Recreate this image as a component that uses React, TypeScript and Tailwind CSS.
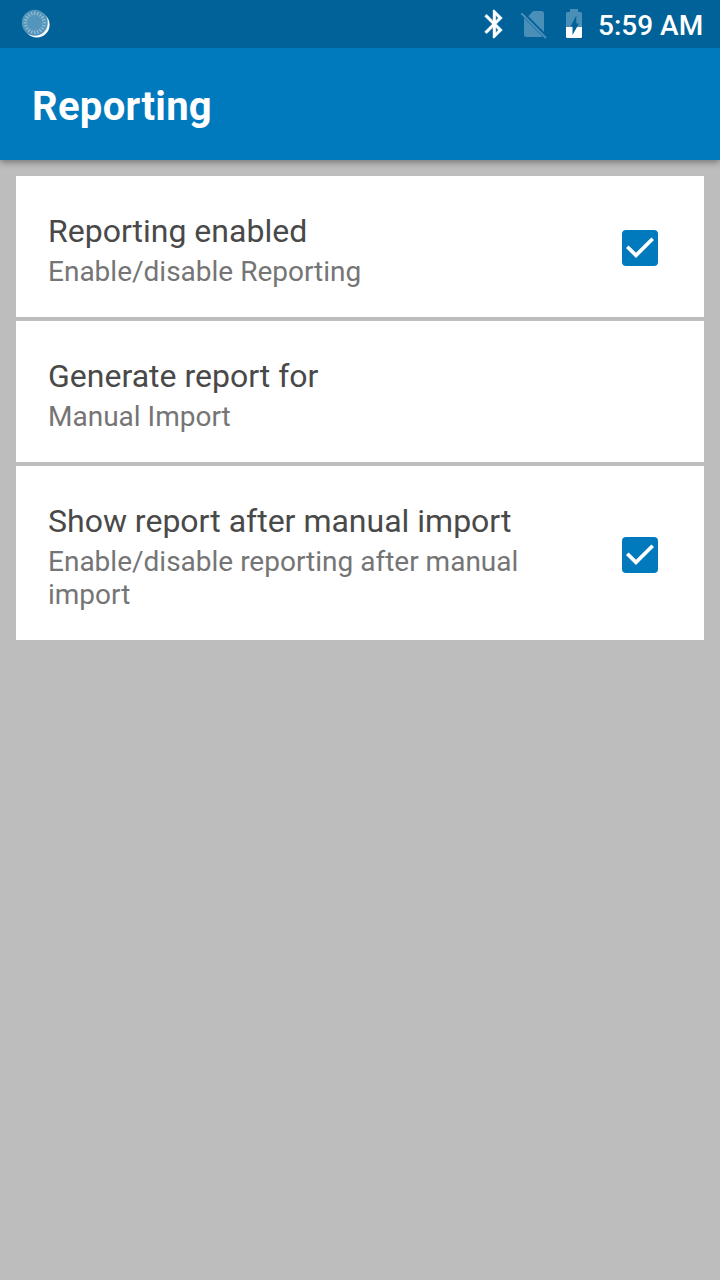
import React from 'react';

function SpinnerIcon() {
  const ticks = Array.from({ length: 20 }, (_, i) => i * 18);
  return (
    <svg className="ml-5 h-12 w-8" viewBox="20 0 32 48">
      <circle cx="36.8" cy="24.8" r="12.8" fill="#fff" />
      <circle cx="34.8" cy="22.8" r="13" fill="#5496bb" />
      {ticks.map((a) => (
        <path key={a} d="M34.8 11.6v3.4" stroke="#9cc3d8" strokeWidth="1.1" transform={`rotate(${a} 34.8 22.8)`} />
      ))}
    </svg>
  );
}

function StatusIcons() {
  return (
    <svg className="h-12 w-[120px]" viewBox="478 0 120 48">
      <path
        transform="translate(477.600 7.2) scale(1.4)"
        fill="#fff"
        stroke="#fff"
        strokeWidth="0.3"
        d="M17.71 7.71 12 2h-1v7.59L6.41 5 5 6.41 10.59 12 5 17.59 6.41 19 11 14.41V22h1l5.71-5.71L13.41 12l4.3-4.29zM13 5.83l1.88 1.88L13 9.59V5.83zm1.88 10.46L13 18.17v-3.76l1.88 1.88z"
      />
      <path d="M528.3 16.3 533.2 11H541.5Q544 11 544 13.5V32Z" fill="#4a8fb7" />
      <path d="M524 18 542.7 36.7Q541.5 37 540.5 37H526.5Q524 37 524 34.5Z" fill="#4a8fb7" />
      <path d="M521.3 13.3 546 38" stroke="#4a8fb7" strokeWidth="2" />
      <path d="M570 9h8v3h2.5Q582 12 582 13.5V27h-16V13.5Q566 12 567.5 12H570Z" fill="#4a8fb7" />
      <path d="M566 27h16v9.5q0 1.5-1.5 1.5h-13q-1.500 0-1.500-1.500Z" fill="#fff" />
      <path d="M576.300 15.500v8h2.700L572.500 35v-8.500H570.500Z" fill="#006298" />
    </svg>
  );
}

function CheckBox() {
  return (
    <svg className="mt-[3px] mr-[46px] size-9 shrink-0" viewBox="0 0 36 36" role="checkbox" aria-checked="true">
      <rect width="36" height="36" rx="4" fill="#007abc" />
      <path d="M5.300 16.700 14 25.400 30.700 8.700" fill="none" stroke="#fff" strokeWidth="3.700" />
    </svg>
  );
}

function Setting({ title, summary, checked }: { title: string; summary: string; checked?: boolean }) {
  return (
    <div className="flex items-center bg-white">
      <div className="flex-1 pt-9 pr-14 pb-[29px] pl-8">
        <div className="text-[32px] leading-[38px] text-[#494949]">{title}</div>
        <div className="mt-[5px] text-[28px] leading-[33px] text-[#757575]">{summary}</div>
      </div>
      {checked && <CheckBox />}
    </div>
  );
}

export default function App() {
  return (
    <div className="flex h-[1280px] w-[720px] flex-col bg-[#bdbdbd] font-['Roboto',sans-serif]">
      <div className="flex h-12 items-center bg-[#006298] text-white">
        <SpinnerIcon />
        <div className="flex-1" />
        <StatusIcons />
        <div className="mr-4 w-[106px] pt-0.5 text-[28px] leading-[33px] font-medium whitespace-nowrap">5:59 AM</div>
      </div>
      <header className="flex h-28 items-center bg-[#007abc] px-8 pt-1 text-white [clip-path:inset(0_0_-16px_0)] shadow-[0_2px_7px_rgba(0,0,0,0.4)]">
        <h1 className="text-[40px] leading-[47px] font-bold tracking-[0.3px]">Reporting</h1>
      </header>
      <main className="flex flex-col gap-1 px-4 pt-4">
        <Setting title="Reporting enabled" summary="Enable/disable Reporting" checked />
        <Setting title="Generate report for" summary="Manual Import" />
        <Setting title="Show report after manual import" summary="Enable/disable reporting after manual import" checked />
      </main>
    </div>
  );
}
